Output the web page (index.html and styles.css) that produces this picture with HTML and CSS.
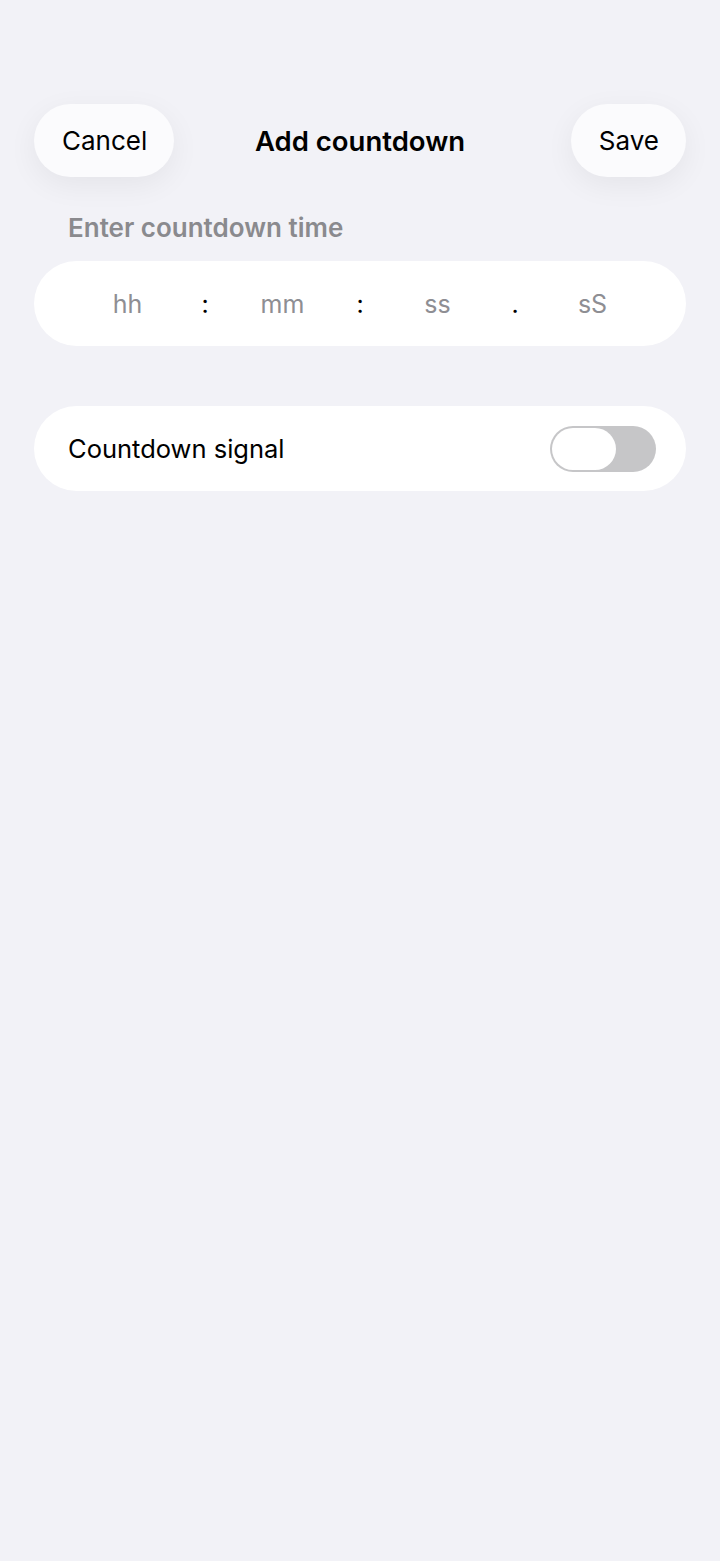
FILE: index.html
```html
<!DOCTYPE html>
<html>
<head>
<meta charset="utf-8">
<link rel="stylesheet" href="styles.css">
</head>
<body>
<div class="screen">
  <header class="nav">
    <button class="pill left">Cancel</button>
    <h1 class="title">Add countdown</h1>
    <button class="pill right">Save</button>
  </header>
  <div class="label">Enter countdown time</div>
  <div class="card time">
    <span class="ph">hh</span>
    <span class="sep">:</span>
    <span class="ph">mm</span>
    <span class="sep">:</span>
    <span class="ph">ss</span>
    <span class="sep">.</span>
    <span class="ph">sS</span>
  </div>
  <div class="card row">
    <span class="row-text">Countdown signal</span>
    <span class="toggle"><span class="knob"></span></span>
  </div>
</div>
</body>
</html>
```
FILE: styles.css
```css
html, body {
  margin: 0;
  padding: 0;
  background: #f2f2f7;
}
body {
  font-family: Inter, "Noto Sans", sans-serif;
  color: #000;
  width: 720px;
  height: 1561px;
}
.screen {
  padding: 104px 34px 0 34px;
}
.nav {
  display: grid;
  grid-template-columns: 1fr auto 1fr;
  align-items: center;
  height: 73px;
}
.pill {
  height: 73px;
  border: none;
  border-radius: 37px;
  background: #fbfbfd;
  font-family: inherit;
  font-size: 26px;
  color: #000;
  padding: 0 27px 0 28px;
  box-shadow: 0 8px 30px rgba(0,0,0,0.06);
}
.pill.left {
  justify-self: start;
}
.pill.right {
  justify-self: end;
}
.title {
  margin: 0;
  font-size: 27.5px;
  font-weight: 600;
}
.label {
  margin: 36px 0 0 34px;
  font-size: 26px;
  font-weight: 600;
  color: #8a8a8e;
  line-height: 30px;
}
.card {
  background: #fff;
  border-radius: 43px;
  height: 85px;
}
.time {
  margin-top: 18px;
  display: grid;
  grid-template-columns: repeat(7, 77.5px);
  justify-content: center;
  align-items: center;
  font-size: 25px;
}
.ph {
  text-align: center;
  color: #8e8e93;
}
.sep {
  text-align: center;
  color: #000;
}
.row {
  margin-top: 60px;
  display: flex;
  align-items: center;
  justify-content: space-between;
  padding: 0 30px 0 34px;
}
.row-text {
  font-size: 25.5px;
}
.toggle {
  width: 106px;
  height: 46px;
  border-radius: 23px;
  background: #c6c6c8;
  display: flex;
  align-items: center;
  padding: 0 2px;
  box-sizing: border-box;
}
.knob {
  width: 64px;
  height: 42px;
  border-radius: 21px;
  background: #fff;
}
```
